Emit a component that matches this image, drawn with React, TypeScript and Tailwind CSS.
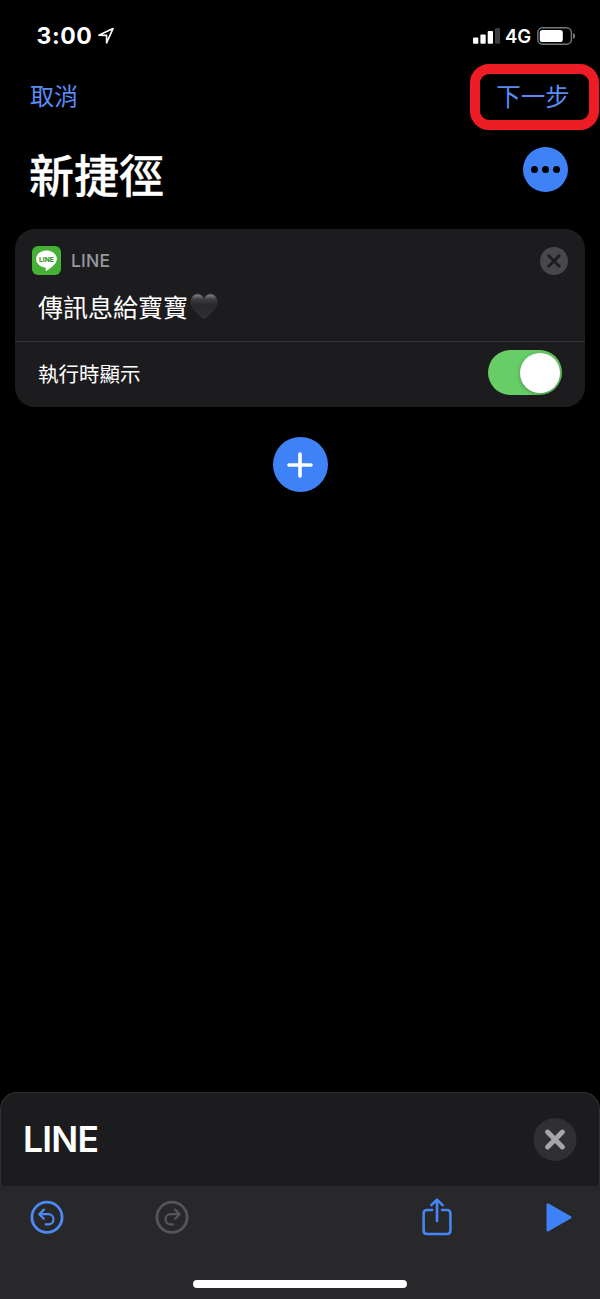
import { useState } from 'react';

const BLUE = '#3f82f7';

function StatusBar() {
  return (
    <div className="flex h-16 items-start justify-between pt-[24px] pr-[24px] pl-[36.5px]">
      <div className="flex h-6 items-center">
        <span className="w-[56px] text-[23px] leading-6 font-bold tracking-[0.6px] whitespace-nowrap">3:00</span>
        <svg width="18" height="18" viewBox="0 0 18 18" className="ml-[4px]" fill="none">
          <path d="M1.8 8.2 L16 1.6 L9.6 15.8 V8.4 Z" stroke="#fff" strokeWidth="1.6" strokeLinejoin="round" />
        </svg>
      </div>
      <div className="flex h-6 items-center">
        <svg width="27" height="16" viewBox="0 0 27 16">
          <rect x="0" y="9.5" width="5.3" height="6.2" rx="1" fill="#fff" />
          <rect x="7.4" y="6.5" width="5.3" height="9.2" rx="1" fill="#fff" />
          <rect x="14.7" y="3" width="5.3" height="12.7" rx="1" fill="#fff" />
          <rect x="22" y="0" width="5" height="15.7" rx="1" fill="#3d3d3d" />
        </svg>
        <span className="ml-[5px] w-[27px] text-[18.5px] leading-6 font-semibold whitespace-nowrap">4G</span>
        <svg width="39" height="18" viewBox="0 0 39 18" className="ml-[5px]">
          <rect x="0.8" y="0.8" width="33.6" height="16.4" rx="4.8" fill="none" stroke="#7a7a7a" strokeWidth="1.4" />
          <rect x="2.8" y="3" width="23" height="12" rx="2.6" fill="#fff" />
          <path d="M36 6 Q38.2 7 38.2 9 Q38.2 11 36 12 Z" fill="#7a7a7a" />
        </svg>
      </div>
    </div>
  );
}

function LineLogo() {
  return (
    <svg width="29" height="29" viewBox="0 0 29 29">
      <rect width="29" height="29" rx="6" fill="#45b035" />
      <path
        d="M14.5 4.6 C8.7 4.6 4.1 8.4 4.1 13.1 C4.1 17.3 7.8 20.8 12.8 21.5 C14 21.7 14 22.4 13.7 24.5 C13.7 25 14 25 14.5 24.7 C18.5 22.4 24.9 18.2 24.9 13.1 C24.9 8.4 20.3 4.6 14.5 4.6 Z"
        fill="#fff"
      />
      <text x="14.5" y="15.6" textAnchor="middle" fontSize="6.7" fontWeight="800" fill="#3f9e31">
        LINE
      </text>
    </svg>
  );
}

function Heart() {
  return (
    <svg width="28" height="27" viewBox="0 0 28 27" className="ml-[2px]">
      <defs>
        <linearGradient id="heart" x1="0" y1="0" x2="0" y2="1">
          <stop offset="0" stopColor="#8a8a8d" />
          <stop offset="0.22" stopColor="#3c3c3e" />
          <stop offset="0.45" stopColor="#29292b" />
          <stop offset="1" stopColor="#303033" />
        </linearGradient>
      </defs>
      <path
        d="M14 25.8 C9 22 1 15.5 1 8.2 C1 4 3.8 1 7.4 1 C10.5 1 13 3 14 5.6 C15 3 17.5 1 20.6 1 C24.2 1 27 4 27 8.2 C27 15.5 19 22 14 25.8 Z"
        fill="url(#heart)"
        stroke="#3b3b3e"
        strokeWidth="0.7"
      />
    </svg>
  );
}

// flip = true gives the redo arrow
function HistoryIcon({ color, flip = false }: { color: string; flip?: boolean }) {
  return (
    <svg width="34" height="34" viewBox="0 0 34 34" fill="none" stroke={color} className={flip ? '-scale-x-100' : ''}>
      <circle cx="17" cy="17.3" r="15.1" strokeWidth="2.8" />
      <path d="M13.9 9.6 L9.3 14.2 L13.9 18.8 M9.6 14.2 H18.4 A5.1 5.1 0 0 1 18.4 24.4 H15.8" strokeWidth="2.2" strokeLinecap="round" strokeLinejoin="round" />
    </svg>
  );
}

export default function App() {
  const [show, setShow] = useState(true);

  return (
    <main className="flex h-[1299px] w-[600px] flex-col overflow-hidden bg-black font-['Inter','Noto_Sans_CJK_TC',sans-serif] text-white">
      <StatusBar />

      <header className="flex h-[66px] items-start justify-between pr-px pl-[30px]">
        <button className="h-[64px] pt-[1px] text-[24px] leading-none text-[#588cf5]">取消</button>
        <button className="h-[66px] w-[129px] rounded-[19px] border-[10.5px] border-[#ee1c25] pr-[3px] text-[24.5px] leading-none whitespace-nowrap text-[#588cf5]">
          下一步
        </button>
      </header>

      <div className="flex h-[99px] items-start justify-between pr-[32.5px] pl-[29px]">
        <h1 className="mt-[23px] text-[45px] leading-[48px] font-medium [-webkit-text-stroke:0.3px_white]">新捷徑</h1>
        <button className="mt-[17px] flex size-[45px] items-center justify-center gap-[4px] rounded-full bg-[#3f82f7]">
          <span className="size-[7px] rounded-full bg-black" />
          <span className="size-[7px] rounded-full bg-black" />
          <span className="size-[7px] rounded-full bg-black" />
        </button>
      </div>

      <section className="mx-[15px] h-[178px] shrink-0 rounded-[20px] bg-[#1c1c1e]">
        <div className="h-[113px] border-b border-[#343437] pt-[17px]">
          <div className="flex h-[29px] items-center pr-[17px] pl-[17px]">
            <LineLogo />
            <span className="ml-[10px] pt-[2px] text-[17.5px] font-medium tracking-[0.2px] text-[#98989f]">LINE</span>
            <button className="ml-auto">
              <svg width="28" height="28" viewBox="0 0 28 28">
                <circle cx="14" cy="14" r="14" fill="#48484b" />
                <path d="M8.8 8.8 L19.2 19.2 M19.2 8.8 L8.8 19.2" stroke="#1c1c1e" strokeWidth="2.8" strokeLinecap="round" />
              </svg>
            </button>
          </div>
          <div className="mt-[15px] flex h-8 items-center pl-[23px]">
            <span className="pt-[3px] text-[25px] leading-8">傳訊息給寶寶</span>
            <Heart />
          </div>
        </div>
        <div className="flex h-[61px] items-center justify-between pr-[23px] pl-[23px]">
          <span className="pt-[5px] text-[20.5px]">執行時顯示</span>
          <button
            role="switch"
            aria-checked={show}
            onClick={() => setShow(!show)}
            className={`flex h-[45px] w-[74px] items-center rounded-full px-[2.5px] ${show ? 'justify-end bg-[#67ce67]' : 'justify-start bg-[#39393d]'}`}
          >
            <span className="size-[40px] rounded-full bg-white shadow-[0_1px_4px_rgba(0,0,0,0.3)]" />
          </button>
        </div>
      </section>

      <button className="mt-[30px] flex size-[55px] shrink-0 items-center justify-center self-center rounded-full bg-[#3f82f7]">
        <svg width="26" height="26" viewBox="0 0 26 26">
          <path d="M13 2 V24 M2 13 H24" stroke="#fff" strokeWidth="3.6" strokeLinecap="round" />
        </svg>
      </button>

      <div className="mt-auto bg-black">
        <div className="flex h-[94px] items-center justify-between rounded-t-[17px] border border-b-0 border-[#303033] bg-[#1c1c1e] pr-[22px] pl-[22px]">
          <h2 className="text-[35.5px] font-semibold tracking-[-0.8px]">LINE</h2>
          <button>
            <svg width="44" height="44" viewBox="0 0 44 44">
              <circle cx="22" cy="21.5" r="21.5" fill="#303033" />
              <path d="M14.6 14.1 L29.4 28.9 M29.4 14.1 L14.6 28.9" stroke="#a5a5ac" strokeWidth="5" strokeLinecap="round" />
            </svg>
          </button>
        </div>

        <footer className="flex h-[113px] flex-col bg-[#28282a]">
          <nav className="flex h-[62px] items-center pr-[28px] pl-[30.4px]">
            <button>
              <HistoryIcon color="#4d8af7" />
            </button>
            <button className="ml-[91px]">
              <HistoryIcon color="#555557" flip />
            </button>
            <button className="ml-auto">
              <svg width="30" height="38" viewBox="0 0 30 38" fill="none" stroke="#4386f6" strokeWidth="2.6" strokeLinecap="round" strokeLinejoin="round">
                <path d="M10 12 H5 Q1.6 12 1.6 15.4 V32.6 Q1.6 36 5 36 H25 Q28.4 36 28.4 32.6 V15.4 Q28.4 12 25 12 H20" />
                <path d="M15 23 V2 M9.4 7.2 L15 1.6 L20.6 7.2" />
              </svg>
            </button>
            <button className="ml-[94px]">
              <svg width="26" height="30" viewBox="0 0 26 30">
                <path d="M1.8 2.6 V28.2 L24.2 15.4 Z" fill={BLUE} stroke={BLUE} strokeWidth="2.6" strokeLinejoin="round" />
              </svg>
            </button>
          </nav>
          <div className="mt-[32px] h-[8px] w-[214px] self-center rounded-full bg-white" />
        </footer>
      </div>
    </main>
  );
}
